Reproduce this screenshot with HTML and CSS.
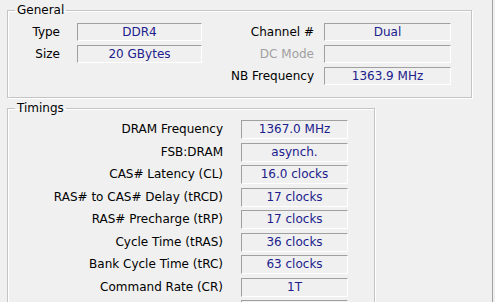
FILE: index.html
```html
<!DOCTYPE html>
<html lang="en">
<head>
    <meta charset="UTF-8">
    <title>CPU-Z Memory</title>
    <link rel="stylesheet" href="styles.css">
</head>
<body>
    <div class="tab-page">
        <!-- General -->
        <fieldset class="group general">
            <legend>General</legend>
            <div class="general-grid">
                <span class="label">Type</span>
                <span class="field">DDR4</span>
                <span class="label">Channel #</span>
                <span class="field">Dual</span>

                <span class="label">Size</span>
                <span class="field">20 GBytes</span>
                <span class="label disabled">DC Mode</span>
                <span class="field"></span>

                <span class="label"></span>
                <span></span>
                <span class="label">NB Frequency</span>
                <span class="field">1363.9 MHz</span>
            </div>
        </fieldset>

        <!-- Timings -->
        <fieldset class="group timings">
            <legend>Timings</legend>
            <div class="timings-grid">
                <span class="label">DRAM Frequency</span>
                <span class="field">1367.0 MHz</span>
                <span class="label">FSB:DRAM</span>
                <span class="field">asynch.</span>
                <span class="label">CAS# Latency (CL)</span>
                <span class="field">16.0 clocks</span>
                <span class="label">RAS# to CAS# Delay (tRCD)</span>
                <span class="field">17 clocks</span>
                <span class="label">RAS# Precharge (tRP)</span>
                <span class="field">17 clocks</span>
                <span class="label">Cycle Time (tRAS)</span>
                <span class="field">36 clocks</span>
                <span class="label">Bank Cycle Time (tRC)</span>
                <span class="field">63 clocks</span>
                <span class="label">Command Rate (CR)</span>
                <span class="field">1T</span>
                <span class="label"></span>
                <span class="field"></span>
            </div>
        </fieldset>
    </div>
</body>
</html>
```

FILE: styles.css
```css
/* Base */
body {
    margin: 0;
    background: #f0f0f0;
    font-family: "DejaVu Sans", sans-serif;
    font-size: 12px;
    color: #000;
    height: 302px;
    overflow: hidden;
}

.tab-page {
    width: 493px;
    height: 302px;
    border-right: 1px solid #a0a0a0;
    padding: 2px 0 0 7px;
    box-sizing: border-box;
    overflow: hidden;
}

/* Group boxes */
.group {
    margin: 0;
    padding: 5px 0 12px 0;
    border: 1px solid #c4c4c4;
    box-shadow: 1px 1px 0 #fff, inset 1px 1px 0 #fff;
    min-width: 0;
    box-sizing: border-box;
}

.group legend {
    padding: 0 2px;
    margin-left: 7px;
    line-height: 16px;
}

.general {
    width: 465px;
}

.timings {
    width: 368px;
    margin-top: 2px;
    padding-top: 4px;
}

/* Labels and value boxes */
.label {
    text-align: right;
    white-space: nowrap;
}

.label.disabled {
    color: #a0a0a0;
}

.field {
    border-top: 1px solid #a0a0a0;
    border-left: 1px solid #a0a0a0;
    border-bottom: 1px solid #fff;
    border-right: 1px solid #fff;
    color: #20208c;
    text-align: center;
    white-space: nowrap;
    box-sizing: border-box;
}

/* General grid */
.general-grid {
    display: grid;
    grid-template-columns: 69px 125px 122px 127px;
    grid-auto-rows: 18px;
    row-gap: 4px;
    align-items: center;
}

.general-grid .label:nth-child(4n+1) { padding-right: 17px; }
.general-grid .label:nth-child(4n+3) { padding-right: 10px; }

.general-grid .field {
    height: 18px;
    line-height: 16px;
}

/* Timings grid */
.timings-grid {
    display: grid;
    grid-template-columns: 233px 107px;
    grid-auto-rows: 19px;
    row-gap: 3.5px;
    align-items: center;
}

.timings-grid .label {
    padding-right: 18px;
    line-height: 19px;
}

.timings-grid .field {
    height: 19px;
    line-height: 17px;
}
```
